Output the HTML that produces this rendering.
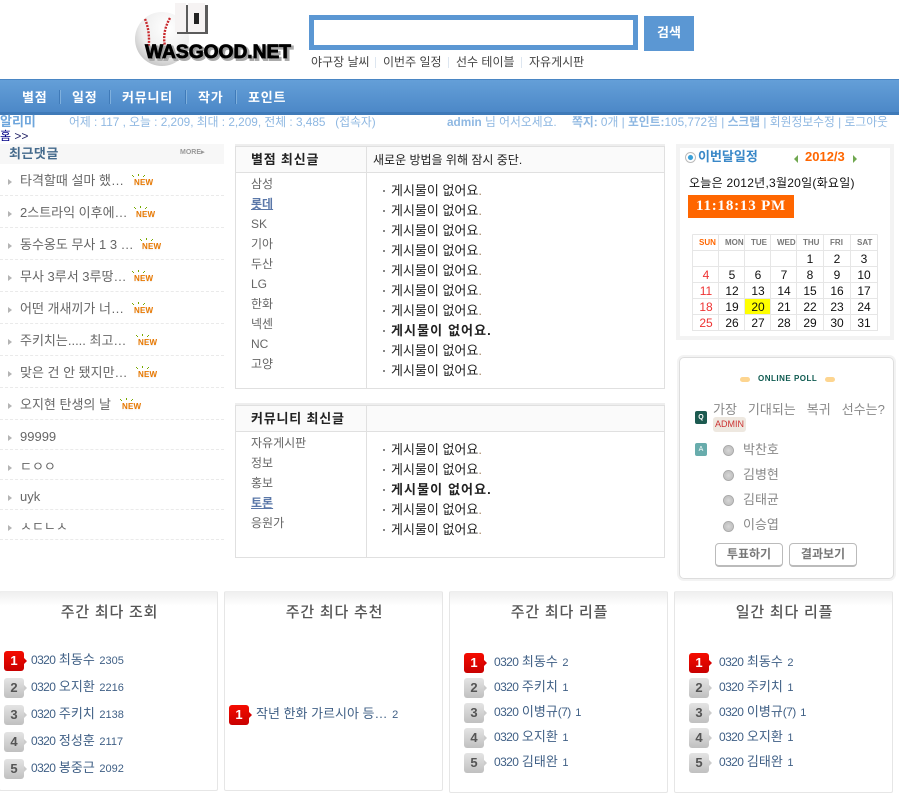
<!DOCTYPE html>
<html lang="ko"><head><meta charset="utf-8"><title>WASGOOD.NET</title>
<style>
html,body{margin:0;padding:0;background:#fff}
body{position:relative;width:904px;height:803px;overflow:hidden;font:12px/14px "Liberation Sans","Noto Sans CJK KR",sans-serif;color:#333}
div,span.t,a{position:absolute}
.t{white-space:nowrap;position:absolute}
.l{left:20px;color:#666;font-size:13px}
.d{left:0;width:224px;border-top:1px dashed #eaeaea;height:0}
.ar{left:8px;width:0;height:0;border-left:4px solid #b4b4b4;border-top:3px solid transparent;border-bottom:3px solid transparent}
.m{left:251px;color:#666}
.n{left:383px;color:#222;padding-left:8px;font-size:13px;margin-top:1px}
.n:before{content:"";position:absolute;left:0;top:6px;width:2px;height:2px;background:#888}
.n i{font-style:normal;color:#a86}
.hd{font-weight:bold;color:#222;font-size:13px;letter-spacing:.8px}
.s{color:#8fb8e2;font-size:11.8px}
.c{width:26px;text-align:center;color:#111;font-size:12px}
.r{color:#e33}
.w{font:bold 8px/10px "Liberation Sans",sans-serif;color:#777;background:#fff;text-align:center;height:10px}
.p{top:591px;width:217px;height:198px;border:1px solid #e6e6e6;border-top-color:#eee;border-radius:2px;background:linear-gradient(#efefef,#fff 14px)}
.pt{top:605px;width:219px;text-align:center;font-size:15px;color:#555;line-height:16px;font-weight:500;letter-spacing:.8px}
.b{width:20px;height:20px;border-radius:3px;color:#fff;font:bold 13px/20px "Liberation Sans",sans-serif;text-align:center}
.b:after{content:"";position:absolute;right:-3px;top:7px;border-left:3px solid #ccc;border-top:3px solid transparent;border-bottom:3px solid transparent}
.b1{background:linear-gradient(#f50c00,#c80000)}.b1:after{border-left-color:#d80000}
.b2{background:linear-gradient(#e4e4e4,#c0c0c0);color:#555}
.x{color:#3f5f85;font-size:13px;margin-top:1px}
.x span{font-size:11px;margin-left:1px}
.x u{text-decoration:none;font-size:12px;letter-spacing:-.6px}
.rad{left:723px;width:9px;height:9px;border:1px solid #aaa;border-radius:50%;background:radial-gradient(#d8d8d8,#c4c4c4 60%,#eee)}
.o{left:743px;color:#888;font-size:13px}
.btn{top:543px;width:66px;height:21px;border:1px solid #bbb;border-bottom-width:2px;border-radius:4px;text-align:center;line-height:21px;font-weight:bold;color:#777;font-size:12px}
.sep{top:57px;width:1px;height:11px;background:#dde6f0}
.ns{top:90px;width:1px;height:14px;background:#3f7ab8;border-right:1px solid #7fb0dd}
.nt{top:91px;color:#fff;font-weight:bold;font-size:13px;letter-spacing:.8px}
.nw{top:179px;width:18px;height:7px;font:bold 8px/8px "Liberation Sans",sans-serif;color:#e87800;text-shadow:0 1px 1px #eee;letter-spacing:.2px}
.nw:before{content:"";position:absolute;left:-2px;top:-4px;width:1px;height:1px;background:#7a0;box-shadow:1px 1px #7a0,6px -1px #7a0,6px 0 #7a0,11px 1px #7a0,12px 0 #7a0}
</style></head><body>

<!-- logo -->
<svg style="position:absolute;left:130px;top:0" width="170" height="66" viewBox="0 0 170 66">
<defs><radialGradient id="g" cx=".6" cy=".3" r=".8"><stop offset="0" stop-color="#fff"/><stop offset=".6" stop-color="#eee"/><stop offset="1" stop-color="#bbb"/></radialGradient></defs>
<circle cx="32" cy="39" r="27" fill="url(#g)"/>
<path d="M15 19q6 14 3 34M40 18q-8 14-5 28" fill="none" stroke="#c8282c" stroke-width="2.4" stroke-dasharray="2 1.2"/>
<rect x="47" y="5" width="31" height="29" fill="#333" opacity=".8"/>
<rect x="45" y="3" width="11" height="29" fill="#f6f3f3"/>
<rect x="58" y="3" width="17" height="29" fill="#f6f3f3"/>
<rect x="64" y="13" width="5" height="11" fill="#222"/>
<text x="17" y="60" font-family="Liberation Sans,sans-serif" font-weight="bold" font-size="19" fill="#888" textLength="146" lengthAdjust="spacingAndGlyphs" stroke="#aaa" stroke-width="2">WASGOOD.NET</text>
<text x="15" y="58" font-family="Liberation Sans,sans-serif" font-weight="bold" font-size="19" fill="#000" textLength="146" lengthAdjust="spacingAndGlyphs" stroke="#000" stroke-width=".8">WASGOOD.NET</text>
</svg>

<!-- search -->
<div style="left:309px;top:15px;width:319px;height:25px;border:5px solid #5b97d3;background:#fff"></div>
<div style="left:644px;top:16px;width:50px;height:35px;background:#5b97d3;color:#fff;font-weight:bold;font-size:13px;text-align:center;line-height:33px">검색</div>
<span class="t" style="left:311px;top:55px;color:#444">야구장 날씨</span><div class="sep" style="left:375px"></div>
<span class="t" style="left:383px;top:55px;color:#444">이번주 일정</span><div class="sep" style="left:448px"></div>
<span class="t" style="left:456px;top:55px;color:#444">선수 테이블</span><div class="sep" style="left:521px"></div>
<span class="t" style="left:529px;top:55px;color:#444">자유게시판</span>

<!-- nav -->
<div style="left:0;top:79px;width:899px;height:36px;background:linear-gradient(#649fd8,#4a86c6);border-top:1px solid #4a86c4;box-sizing:border-box;box-shadow:inset 0 -3px 0 #3f7ab8"></div>
<span class="t nt" style="left:22px">별점</span><div class="ns" style="left:59px"></div>
<span class="t nt" style="left:72px">일정</span><div class="ns" style="left:109px"></div>
<span class="t nt" style="left:122px">커뮤니티</span><div class="ns" style="left:185px"></div>
<span class="t nt" style="left:198px">작가</span><div class="ns" style="left:235px"></div>
<span class="t nt" style="left:248px">포인트</span>

<!-- status -->
<span class="t" style="left:0;top:115px;color:#6ea6dc;font-weight:bold;font-size:13px">알리미</span>
<span class="t s" style="left:69px;top:115px">어제 : 117 , 오늘 : 2,209, 최대 : 2,209, 전체 : 3,485 &nbsp; (접속자)</span>
<span class="t s" style="left:447px;top:115px"><b>admin</b> 님 어서오세요.</span>
<span class="t s" style="left:572px;top:115px"><b>쪽지:</b> 0개 | <b>포인트:</b>105,772점 | <b>스크랩</b> | 회원정보수정 | 로그아웃</span>
<span class="t" style="left:0;top:129px;color:#226"><span style="color:#008">홈</span> &gt;&gt;</span>

<!-- left -->
<div style="left:0;top:144px;width:224px;height:20px;background:#f7f7f7"></div>
<span class="t" style="left:9px;top:147px;color:#446a8c;font-weight:bold;font-size:13px;letter-spacing:.5px">최근댓글</span>
<span class="t" style="left:180px;top:148px;font:bold 7px/10px 'Liberation Sans',sans-serif;color:#999">MORE▸</span>
<div class="ar" style="top:179px"></div><span class="t l" style="top:174px">타격할때 설마 했…</span>
<div class="d" style="top:195px"></div>
<div class="ar" style="top:211px"></div><span class="t l" style="top:206px">2스트라익 이후에…</span>
<div class="d" style="top:227px"></div>
<div class="ar" style="top:243px"></div><span class="t l" style="top:238px">동수옹도 무사 1 3 …</span>
<div class="d" style="top:259px"></div>
<div class="ar" style="top:275px"></div><span class="t l" style="top:270px">무사 3루서 3루땅…</span>
<div class="d" style="top:291px"></div>
<div class="ar" style="top:307px"></div><span class="t l" style="top:302px">어떤 개새끼가 너…</span>
<div class="d" style="top:323px"></div>
<div class="ar" style="top:339px"></div><span class="t l" style="top:334px">주키치는..... 최고…</span>
<div class="d" style="top:355px"></div>
<div class="ar" style="top:371px"></div><span class="t l" style="top:366px">맞은 건 안 됐지만…</span>
<div class="d" style="top:387px"></div>
<div class="ar" style="top:403px"></div><span class="t l" style="top:398px">오지현 탄생의 날</span>
<div class="d" style="top:419px"></div>
<div class="ar" style="top:435px"></div><span class="t l" style="top:430px">99999</span>
<div class="d" style="top:449px"></div>
<div class="ar" style="top:465px"></div><span class="t l" style="top:460px">ㄷㅇㅇ</span>
<div class="d" style="top:479px"></div>
<div class="ar" style="top:495px"></div><span class="t l" style="top:490px">uyk</span>
<div class="d" style="top:509px"></div>
<div class="ar" style="top:525px"></div><span class="t l" style="top:520px">ㅅㄷㄴㅅ</span>
<div class="d" style="top:539px"></div>
<span class="t nw" style="left:134px;top:179px">NEW</span>
<span class="t nw" style="left:136px;top:211px">NEW</span>
<span class="t nw" style="left:142px;top:243px">NEW</span>
<span class="t nw" style="left:134px;top:275px">NEW</span>
<span class="t nw" style="left:134px;top:307px">NEW</span>
<span class="t nw" style="left:138px;top:339px">NEW</span>
<span class="t nw" style="left:138px;top:371px">NEW</span>
<span class="t nw" style="left:122px;top:403px">NEW</span>

<!-- mid 1 -->
<div style="left:235px;top:144px;width:430px;height:2px;background:#eee"></div>
<div style="left:235px;top:146px;width:428px;height:241px;border:1px solid #e0e0e0"></div>
<div style="left:236px;top:147px;width:428px;height:25px;background:#fafafa;border-bottom:1px solid #e0e0e0"></div>
<div style="left:366px;top:146px;width:1px;height:242px;background:#e0e0e0"></div>
<span class="t hd" style="left:251px;top:153px">별점 최신글</span>
<span class="t" style="left:373px;top:153px;color:#222">새로운 방법을 위해 잠시 중단.</span>
<span class="t m" style="top:177px">삼성</span>
<span class="t m" style="top:197px;color:#5a77a8;font-weight:bold;text-decoration:underline">롯데</span>
<span class="t m" style="top:217px">SK</span>
<span class="t m" style="top:237px">기아</span>
<span class="t m" style="top:257px">두산</span>
<span class="t m" style="top:277px">LG</span>
<span class="t m" style="top:297px">한화</span>
<span class="t m" style="top:317px">넥센</span>
<span class="t m" style="top:337px">NC</span>
<span class="t m" style="top:357px">고양</span>
<span class="t n" style="top:183px">게시물이 없어요<i>.</i></span>
<span class="t n" style="top:203px">게시물이 없어요<i>.</i></span>
<span class="t n" style="top:223px">게시물이 없어요<i>.</i></span>
<span class="t n" style="top:243px">게시물이 없어요<i>.</i></span>
<span class="t n" style="top:263px">게시물이 없어요<i>.</i></span>
<span class="t n" style="top:283px">게시물이 없어요<i>.</i></span>
<span class="t n" style="top:303px">게시물이 없어요<i>.</i></span>
<span class="t n" style="top:323px;font-weight:bold;letter-spacing:1.1px">게시물이 없어요.</span>
<span class="t n" style="top:343px">게시물이 없어요<i>.</i></span>
<span class="t n" style="top:363px">게시물이 없어요<i>.</i></span>

<!-- mid 2 -->
<div style="left:235px;top:403px;width:430px;height:2px;background:#eee"></div>
<div style="left:235px;top:405px;width:428px;height:151px;border:1px solid #e0e0e0"></div>
<div style="left:236px;top:406px;width:428px;height:25px;background:#fafafa;border-bottom:1px solid #e0e0e0"></div>
<div style="left:366px;top:405px;width:1px;height:152px;background:#e0e0e0"></div>
<span class="t hd" style="left:251px;top:412px">커뮤니티 최신글</span>
<span class="t m" style="top:436px">자유게시판</span>
<span class="t m" style="top:456px">정보</span>
<span class="t m" style="top:476px">홍보</span>
<span class="t m" style="top:496px;color:#5a77a8;font-weight:bold;text-decoration:underline">토론</span>
<span class="t m" style="top:516px">응원가</span>
<span class="t n" style="top:442px">게시물이 없어요<i>.</i></span>
<span class="t n" style="top:462px">게시물이 없어요<i>.</i></span>
<span class="t n" style="top:482px;font-weight:bold;letter-spacing:1.1px">게시물이 없어요.</span>
<span class="t n" style="top:502px">게시물이 없어요<i>.</i></span>
<span class="t n" style="top:522px">게시물이 없어요<i>.</i></span>

<!-- calendar -->
<div style="left:676px;top:144px;width:210px;height:188px;border:4px solid #f3f3f3"></div>
<div style="left:685px;top:152px;width:9px;height:9px;border:1px solid #bbb;border-radius:50%;background:radial-gradient(#3aa0d8 35%,#fff 45%)"></div>
<span class="t" style="left:698px;top:150px;color:#3a88c8;font-weight:bold;font-size:13px">이번달일정</span>
<div style="left:794px;top:155px;border-right:4px solid #70a850;border-top:4px solid transparent;border-bottom:4px solid transparent"></div>
<span class="t" style="left:805px;top:150px;color:#f60;font-weight:bold;font-size:13px">2012/3</span>
<div style="left:853px;top:155px;border-left:4px solid #70a850;border-top:4px solid transparent;border-bottom:4px solid transparent"></div>
<span class="t" style="left:689px;top:176px;color:#111;letter-spacing:.25px">오늘은 2012년,3월20일(화요일)</span>
<div style="left:688px;top:195px;width:106px;height:23px;background:#f60;color:#fff;font:bold 15px/23px 'Liberation Serif',serif;text-align:center;letter-spacing:.8px">11:18:13 PM</div>

<svg style="position:absolute;left:692px;top:234px" width="187" height="98"><g stroke="#e6e6e6" fill="none"><path d="M.5.5H185.5M.5 16.500H185.5M.5 32.500H185.500M.5 48.500H185.500M.5 64.500H185.500M.5 80.500H185.500M.5 96.500H185.500M.500.5V97M26.500.5V97M52.500.5V97M78.500.5V97M104.500.5V97M131.500.5V97M158.500.5V97M185.500.5V97"/></g><rect x="53" y="65" width="25" height="15" fill="#ff0"/></svg>
<div class="w" style="left:699px;top:238px;width:13px;color:#f60">SUN</div><div class="w" style="left:725px;top:238px;width:13px">MON</div><div class="w" style="left:751px;top:238px;width:13px">TUE</div><div class="w" style="left:777px;top:238px;width:13px">WED</div><div class="w" style="left:803px;top:238px;width:13px">THU</div><div class="w" style="left:830px;top:238px;width:13px">FRI</div><div class="w" style="left:857px;top:238px;width:13px">SAT</div>
<span class="t c" style="left:797px;top:252px">1</span><span class="t c" style="left:824px;top:252px">2</span><span class="t c" style="left:851px;top:252px">3</span>
<span class="t c r" style="left:693px;top:268px">4</span><span class="t c" style="left:719px;top:268px">5</span><span class="t c" style="left:745px;top:268px">6</span><span class="t c" style="left:771px;top:268px">7</span><span class="t c" style="left:797px;top:268px">8</span><span class="t c" style="left:824px;top:268px">9</span><span class="t c" style="left:851px;top:268px">10</span>
<span class="t c r" style="left:693px;top:284px">11</span><span class="t c" style="left:719px;top:284px">12</span><span class="t c" style="left:745px;top:284px">13</span><span class="t c" style="left:771px;top:284px">14</span><span class="t c" style="left:797px;top:284px">15</span><span class="t c" style="left:824px;top:284px">16</span><span class="t c" style="left:851px;top:284px">17</span>
<span class="t c r" style="left:693px;top:300px">18</span><span class="t c" style="left:719px;top:300px">19</span><span class="t c" style="left:745px;top:300px">20</span><span class="t c" style="left:771px;top:300px">21</span><span class="t c" style="left:797px;top:300px">22</span><span class="t c" style="left:824px;top:300px">23</span><span class="t c" style="left:851px;top:300px">24</span>
<span class="t c r" style="left:693px;top:316px">25</span><span class="t c" style="left:719px;top:316px">26</span><span class="t c" style="left:745px;top:316px">27</span><span class="t c" style="left:771px;top:316px">28</span><span class="t c" style="left:797px;top:316px">29</span><span class="t c" style="left:824px;top:316px">30</span><span class="t c" style="left:851px;top:316px">31</span>

<!-- poll -->
<div style="left:679px;top:357px;width:213px;height:220px;border:1px solid #ddd;border-radius:5px;box-shadow:0 0 0 2px #f3f3f3"></div>
<div style="left:740px;top:377px;width:10px;height:5px;border-radius:3px;background:#fdd590"></div>
<span class="t" style="left:758px;top:372px;font:bold 8px/14px 'Liberation Sans',sans-serif;color:#0e5a50;letter-spacing:.5px">ONLINE POLL</span>
<div style="left:825px;top:377px;width:10px;height:5px;border-radius:3px;background:#fdd590"></div>
<div style="left:695px;top:411px;width:12px;height:13px;background:#1c5a50;border-radius:2px;color:#fff;font:bold 7px/13px 'Liberation Sans',sans-serif;text-align:center">Q</div>
<span class="t" style="left:713px;top:403px;color:#888;font-size:13px;word-spacing:7.4px">가장 기대되는 복귀 선수는?</span>
<div style="left:713px;top:417px;width:33px;height:15px;background:#eee8e0;border-radius:3px;color:#c33;font:9px/15px 'Liberation Sans',sans-serif;text-align:center">ADMIN</div>
<div style="left:695px;top:443px;width:12px;height:13px;background:#68acac;border-radius:2px;color:#fff;font:7px/13px 'Liberation Sans',sans-serif;text-align:center">A</div>
<div class="rad" style="top:445px"></div><span class="t o" style="top:443px">박찬호</span>
<div class="rad" style="top:470px"></div><span class="t o" style="top:468px">김병현</span>
<div class="rad" style="top:495px"></div><span class="t o" style="top:493px">김태균</span>
<div class="rad" style="top:521px"></div><span class="t o" style="top:518px">이승엽</span>
<div class="btn" style="left:715px">투표하기</div><div class="btn" style="left:789px">결과보기</div>

<!-- bottom -->
<div class="p" style="left:-1px"></div><div class="p" style="left:224px"></div><div class="p" style="left:449px;height:200px"></div><div class="p" style="left:674px;height:200px"></div>
<div class="t pt" style="left:0">주간 최다 조회</div><div class="t pt" style="left:225px">주간 최다 추천</div><div class="t pt" style="left:450px">주간 최다 리플</div><div class="t pt" style="left:675px">일간 최다 리플</div>

<div class="b b1" style="left:4px;top:651px">1</div><span class="t x" style="left:31px;top:652px"><u>0320</u> 최동수 <span>2305</span></span>
<div class="b b2" style="left:4px;top:678px">2</div><span class="t x" style="left:31px;top:679px"><u>0320</u> 오지환 <span>2216</span></span>
<div class="b b2" style="left:4px;top:705px">3</div><span class="t x" style="left:31px;top:706px"><u>0320</u> 주키치 <span>2138</span></span>
<div class="b b2" style="left:4px;top:732px">4</div><span class="t x" style="left:31px;top:733px"><u>0320</u> 정성훈 <span>2117</span></span>
<div class="b b2" style="left:4px;top:759px">5</div><span class="t x" style="left:31px;top:760px"><u>0320</u> 봉중근 <span>2092</span></span>

<div class="b b1" style="left:229px;top:705px">1</div><span class="t x" style="left:256px;top:706px">작년 한화 가르시아 등… <span>2</span></span>

<div class="b b1" style="left:464px;top:653px">1</div><span class="t x" style="left:494px;top:654px"><u>0320</u> 최동수 <span>2</span></span>
<div class="b b2" style="left:464px;top:678px">2</div><span class="t x" style="left:494px;top:679px"><u>0320</u> 주키치 <span>1</span></span>
<div class="b b2" style="left:464px;top:703px">3</div><span class="t x" style="left:494px;top:704px"><u>0320</u> 이병규<u>(7)</u> <span>1</span></span>
<div class="b b2" style="left:464px;top:728px">4</div><span class="t x" style="left:494px;top:729px"><u>0320</u> 오지환 <span>1</span></span>
<div class="b b2" style="left:464px;top:753px">5</div><span class="t x" style="left:494px;top:754px"><u>0320</u> 김태완 <span>1</span></span>

<div class="b b1" style="left:689px;top:653px">1</div><span class="t x" style="left:719px;top:654px"><u>0320</u> 최동수 <span>2</span></span>
<div class="b b2" style="left:689px;top:678px">2</div><span class="t x" style="left:719px;top:679px"><u>0320</u> 주키치 <span>1</span></span>
<div class="b b2" style="left:689px;top:703px">3</div><span class="t x" style="left:719px;top:704px"><u>0320</u> 이병규<u>(7)</u> <span>1</span></span>
<div class="b b2" style="left:689px;top:728px">4</div><span class="t x" style="left:719px;top:729px"><u>0320</u> 오지환 <span>1</span></span>
<div class="b b2" style="left:689px;top:753px">5</div><span class="t x" style="left:719px;top:754px"><u>0320</u> 김태완 <span>1</span></span>
</body></html>
